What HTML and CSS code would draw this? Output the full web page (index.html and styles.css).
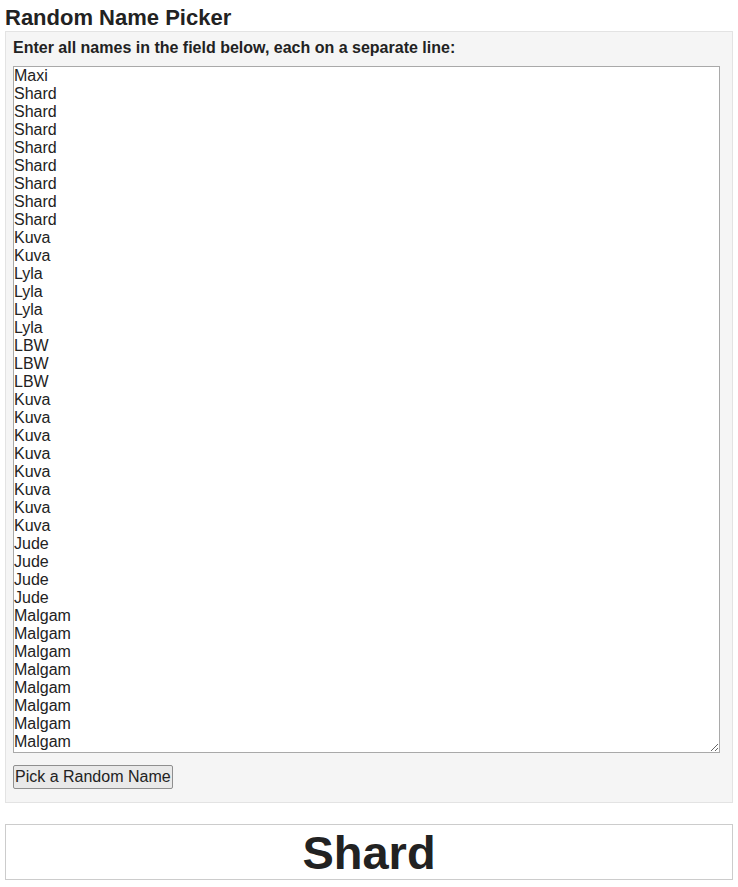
FILE: index.html
```html
<!DOCTYPE html>
<html lang="en">
<head>
<meta charset="utf-8">
<title>Random Name Picker</title>
<link rel="stylesheet" href="styles.css">
</head>
<body>
<h1 class="title">Random Name Picker</h1>
<div class="panel">
<label class="label" for="names">Enter all names in the field below, each on a separate line:</label>
<textarea id="names" class="names" rows="38">Maxi
Shard
Shard
Shard
Shard
Shard
Shard
Shard
Shard
Kuva
Kuva
Lyla
Lyla
Lyla
Lyla
LBW
LBW
LBW
Kuva
Kuva
Kuva
Kuva
Kuva
Kuva
Kuva
Kuva
Jude
Jude
Jude
Jude
Malgam
Malgam
Malgam
Malgam
Malgam
Malgam
Malgam
Malgam</textarea>
<div class="actions"><button class="pick" type="button">Pick a Random Name</button></div>
</div>
<div class="result">Shard</div>
</body>
</html>
```

FILE: styles.css
```css
html, body {
  background: #fff;
}
body {
  margin: 5px;
  font-family: "Liberation Sans", Arial, sans-serif;
  color: #222;
}
.title {
  font-size: 22px;
  font-weight: bold;
  line-height: 25px;
  margin: 0 0 1px;
}
.panel {
  background: #f5f5f5;
  border: 1px solid #e3e3e3;
  padding: 7px 7px 13px;
}
.label {
  display: block;
  font-size: 16px;
  font-weight: bold;
  line-height: 18px;
  margin-bottom: 9px;
}
.names {
  display: block;
  box-sizing: border-box;
  width: 707px;
  height: 687px;
  margin: 0;
  padding: 0;
  border: 1px solid #a9a9a9;
  font-family: "Liberation Sans", Arial, sans-serif;
  font-size: 16px;
  line-height: 18px;
  color: #222;
  background: #fff;
}
.actions {
  margin-top: 12px;
}
.pick {
  height: 24px;
  padding: 0 1px;
  font-family: "Liberation Sans", Arial, sans-serif;
  font-size: 16px;
  color: #222;
  background: #e9e9e9;
  border: 1px solid #8f8f8f;
  border-radius: 2px;
}
.result {
  margin-top: 21px;
  border: 1px solid #ccc;
  padding-top: 2px;
  text-align: center;
  font-size: 47px;
  font-weight: bold;
  line-height: 52px;
  color: #222;
}
```
